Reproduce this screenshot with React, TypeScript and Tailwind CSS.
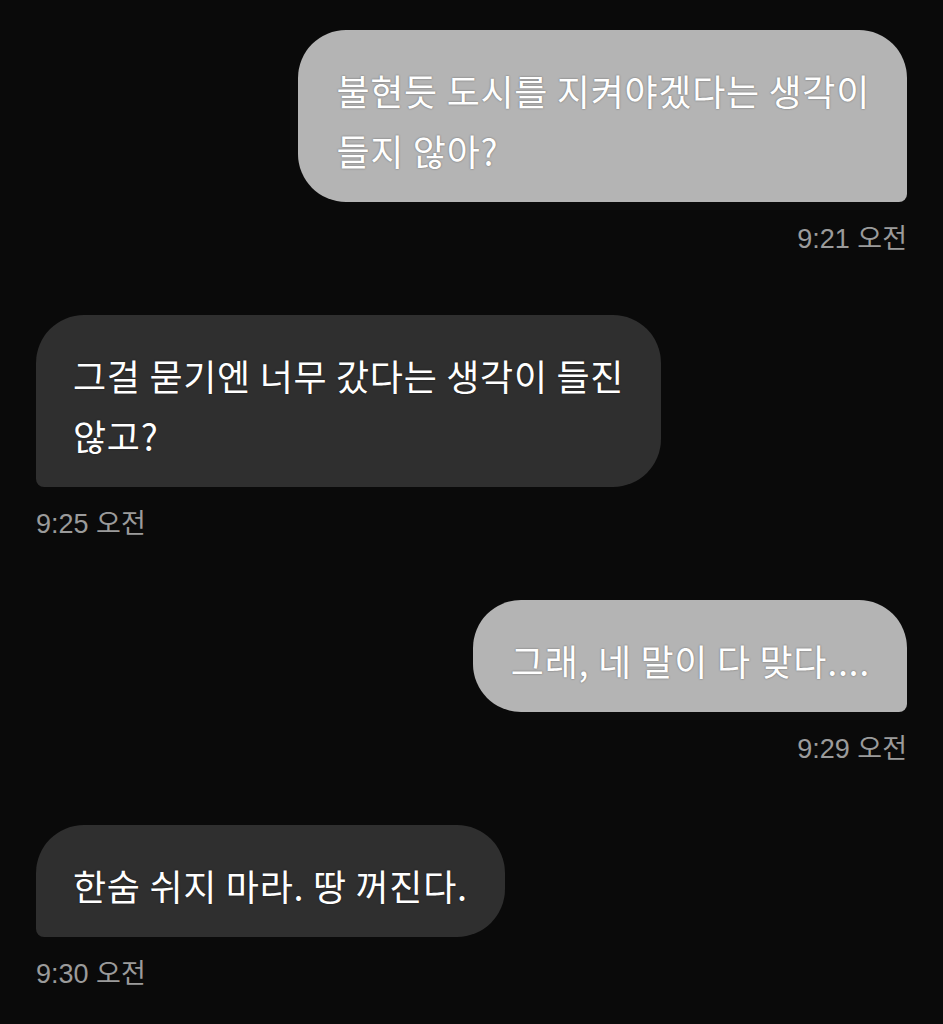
interface Message {
  id: number
  mine: boolean
  lines: string[]
  time: string
}

const messages: Message[] = [
  {
    id: 1,
    mine: true,
    lines: ['불현듯 도시를 지켜야겠다는 생각이', '들지 않아?'],
    time: '9:21 오전',
  },
  {
    id: 2,
    mine: false,
    lines: ['그걸 묻기엔 너무 갔다는 생각이 들진', '않고?'],
    time: '9:25 오전',
  },
  {
    id: 3,
    mine: true,
    lines: ['그래, 네 말이 다 맞다....'],
    time: '9:29 오전',
  },
  {
    id: 4,
    mine: false,
    lines: ['한숨 쉬지 마라. 땅 꺼진다.'],
    time: '9:30 오전',
  },
]

function Bubble({ message }: { message: Message }) {
  const { mine, lines, time } = message

  return (
    <div className={mine ? 'flex flex-col items-end' : 'flex flex-col items-start'}>
      <div
        className={
          mine
            ? 'w-fit rounded-[48px] rounded-br-[8px] bg-[#b4b4b4] pl-[38px] pr-[37px] pt-[30px] pb-[22px]'
            : 'w-fit rounded-[48px] rounded-bl-[8px] bg-[#2f2f2f] pl-[37px] pr-[37px] pt-[30px] pb-[22px]'
        }
      >
        {lines.map((line) => (
          <p
            key={line}
            className="whitespace-nowrap font-['Noto_Sans_CJK_KR',sans-serif] text-[36px] leading-[60px] tracking-[0.7px] text-white [text-shadow:0_0_2px_rgba(0,0,0,0.45)]"
          >
            {line}
          </p>
        ))}
      </div>
      <span className="mt-[19px] font-['Liberation_Sans','Noto_Sans_CJK_KR',sans-serif] text-[27px] leading-[36px] text-[#9b9b9b]">
        {time}
      </span>
    </div>
  )
}

export default function App() {
  return (
    <div className="min-h-[1024px] bg-[#0a0a0a] px-[36px] pt-[30px]">
      <div className="flex flex-col gap-[58px]">
        {messages.map((message) => (
          <Bubble key={message.id} message={message} />
        ))}
      </div>
    </div>
  )
}
